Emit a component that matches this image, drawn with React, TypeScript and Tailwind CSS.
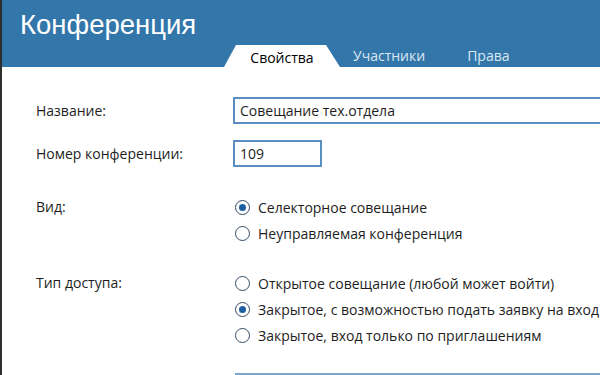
import React from 'react';

const font = { fontFamily: '"Open Sans", "Liberation Sans", Arial, sans-serif' };

function Radio({ checked, label }: { checked?: boolean; label: string }) {
  return (
    <div className="flex items-center gap-[8px] h-[26px]">
      <span className="size-[15px] shrink-0 rounded-full border-[1.5px] border-[#334a63] bg-white flex items-center justify-center">
        {checked && <span className="size-[7px] rounded-full bg-[#1c5fa0]" />}
      </span>
      <span className="text-[14px] text-[#1e1e1e] whitespace-nowrap">{label}</span>
    </div>
  );
}

export default function App() {
  const tabs = ['Свойства', 'Участники', 'Права'];

  return (
    <div className="w-[600px] h-[375px] overflow-hidden bg-white border-l-2 border-[#2e2e2e]" style={font}>
      {/* Header */}
      <div className="h-[67px] bg-[#3276aa] flex flex-col">
        <h1
          className="text-white text-[27.5px] leading-none pl-[18px] pt-[11px]"
          style={{ fontFamily: '"Liberation Sans", Arial, sans-serif' }}
        >
          Конференция
        </h1>
        <div className="mt-auto flex items-end pl-[222px] h-[22px]">
          <div className="relative h-[22px] w-[116px] flex items-center justify-center">
            <svg className="absolute inset-0" width="116" height="22" viewBox="0 0 116 22">
              <polygon points="0,22 12,0 102,0 116,22" fill="#ffffff" />
            </svg>
            <span className="relative text-[14px] text-black pt-[2px]">{tabs[0]}</span>
          </div>
          <span className="text-[14px] text-[#dce8f2] ml-[13px] pb-[1px]">{tabs[1]}</span>
          <span className="text-[14px] text-[#dce8f2] ml-[42px] pb-[1px]">{tabs[2]}</span>
        </div>
      </div>

      {/* Form */}
      <div className="pl-[34px] pt-[30px] text-[14px] text-[#1e1e1e]">
        <div className="flex items-center h-[27px]">
          <div className="w-[197px]">Название:</div>
          <div className="flex-1 h-[27px] border-[2px] border-r-0 border-[#5b8fc2] flex items-center pl-[5px]">
            Совещание тех.отдела
          </div>
        </div>
        <div className="flex items-center h-[27px] mt-[16px]">
          <div className="w-[197px]">Номер конференции:</div>
          <div className="w-[89px] h-[27px] border-[2px] border-[#5b8fc2] flex items-center pl-[5px]">109</div>
        </div>

        <div className="flex mt-[27px]">
          <div className="w-[199px] leading-[26px]">Вид:</div>
          <div className="flex flex-col">
            <Radio checked label="Селекторное совещание" />
            <Radio label="Неуправляемая конференция" />
          </div>
        </div>

        <div className="flex mt-[24px]">
          <div className="w-[199px] leading-[26px]">Тип доступа:</div>
          <div className="flex flex-col">
            <Radio label="Открытое совещание (любой может войти)" />
            <Radio checked label="Закрытое, с возможностью подать заявку на вход" />
            <Radio label="Закрытое, вход только по приглашениям" />
          </div>
        </div>

        <div className="ml-[199px] mt-[25px] h-[2px] bg-[#7aa6cf]" />
      </div>
    </div>
  );
}
